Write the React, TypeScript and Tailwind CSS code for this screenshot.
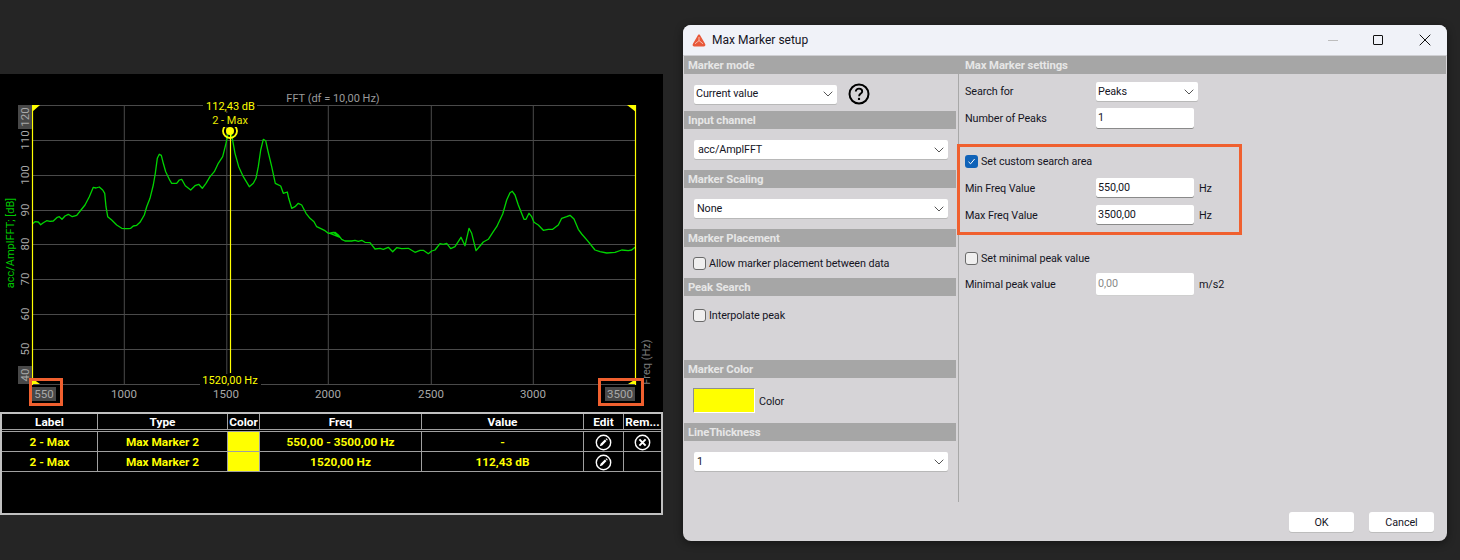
const Z1: number[][] = [[97,462],[105,455],[115,456],[122,464],[130,458],[140,452],[150,454],[160,453],[172,442],[178,440],[186,448],[195,438],[205,433],[217,440],[230,436],[243,420],[255,405],[268,380],[280,352],[288,354],[298,351],[308,360],[314,370],[318,410],[323,440],[335,450],[350,465],[365,475],[375,476],[385,476],[392,475],[400,468],[410,466],[420,457],[433,435],[440,410],[450,385],[460,345],[466,310],[472,265],[478,253],[484,256],[490,280],[497,305],[510,332],[515,340],[530,340],[538,330],[545,328],[556,347],[572,360],[585,347],[596,343],[607,355],[618,340],[630,320],[643,305],[655,280],[668,260],[678,220],[684,190],[690,183],[696,200],[705,250],[716,290],[730,320],[748,350],[760,340],[768,325],[775,290],[782,240],[790,208],[797,212],[803,240],[815,290],[826,340],[832,343],[842,348],[850,370],[862,366],[866,385],[875,415],[885,410],[895,400],[905,405],[918,430],[930,445],[942,455],[950,470],[975,482],[985,490],[1000,487],[1020,502]];
const Z2: number[][] = [[0,490],[15,487],[25,495],[35,508],[45,513],[65,513],[75,511],[85,514],[95,511],[105,517],[120,518],[135,537],[150,535],[160,538],[175,532],[188,545],[200,533],[215,536],[235,535],[255,547],[270,541],[280,541],[295,551],[305,543],[315,540],[330,521],[340,523],[350,520],[362,536],[375,530],[393,502],[405,527],[417,475],[425,490],[438,542],[450,528],[460,516],[475,508],[490,485],[500,470],[518,432],[530,390],[540,368],[547,364],[555,375],[565,405],[582,448],[588,448],[597,430],[605,440],[612,457],[625,465],[640,481],[655,478],[668,478],[685,465],[695,445],[710,440],[720,436],[732,447],[745,478],[755,492],[775,515],[795,540],[810,545],[830,549],[855,547],[875,540],[895,542],[905,540],[915,532]];
const trace = [
  ...Z1.map(([x, y]) => `${(x / 3).toFixed(1)},${(70 + y / 3).toFixed(1)}`),
  ...Z2.map(([x, y]) => `${(330 + x / 3).toFixed(1)},${(70 + y / 3).toFixed(1)}`),
].join(" ");

const hLines = [105, 140, 175, 210, 244, 279, 314, 349, 384];
const vLines = [124, 226.5, 328, 431, 533];
const yTicks: [string, number][] = [["110", 140], ["100", 175], ["90", 210], ["80", 244], ["70", 279], ["60", 314], ["50", 349]];
const xTicks: [string, number][] = [["1000", 124], ["1500", 226], ["2000", 328], ["2500", 431], ["3000", 533]];

function Chart() {
  return (
    <div className="relative h-[338px] w-[663px] bg-black">
      <svg width="663" height="338" viewBox="0 74 663 338" className="block" style={{ fontFamily: "Roboto, sans-serif" }}>
        {hLines.map((y) => (
          <line key={y} x1="32" x2="635" y1={y + 0.5} y2={y + 0.5} stroke="#4a4a4a" />
        ))}
        {vLines.map((x) => (
          <line key={x} x1={x + 0.3} x2={x + 0.3} y1="105" y2="384" stroke="#4a4a4a" />
        ))}
        <polyline points={trace} fill="none" stroke="#00d400" strokeWidth="1.3" strokeLinejoin="round" />
        <line x1="32.5" x2="32.5" y1="105" y2="385" stroke="#ffff00" strokeWidth="1.2" />
        <line x1="635.5" x2="635.5" y1="105" y2="385" stroke="#ffff00" strokeWidth="1.2" />
        <line x1="230.5" x2="230.5" y1="132" y2="373" stroke="#ffff00" strokeWidth="1.2" />
        <polygon points="32,105 40,105 32,112" fill="#ffff00" />
        <polygon points="627,105 636,105 636,112" fill="#ffff00" />
        <polygon points="33,384 33,379 40,384" fill="#ffff00" />
        <polygon points="636,384 636,379 628,384" fill="#ffff00" />

        <circle cx="230" cy="131" r="7" fill="none" stroke="#ffff00" strokeWidth="1.8" />
        <circle cx="230" cy="131" r="4" fill="#ffff00" />
        <rect x="203" y="100" width="54" height="11" fill="#000" />
        <rect x="212" y="113" width="36" height="14" fill="#000" />
        <rect x="200" y="374" width="61" height="13" fill="#000" />
        <text x="333" y="102" textAnchor="middle" fontSize="11" fill="#9a9a9a">FFT (df = 10,00 Hz)</text>
        <text x="230.5" y="110" textAnchor="middle" fontSize="11" fill="#ffff00">112,43 dB</text>
        <text x="230" y="124" textAnchor="middle" fontSize="11" fill="#e8e800">2 - Max</text>
        <text x="230" y="384" textAnchor="middle" fontSize="11" fill="#ffff00">1520,00 Hz</text>

        <rect x="18" y="105" width="14" height="24" fill="#484848" />
        <rect x="18" y="366" width="14" height="18" fill="#484848" />
        <rect x="32" y="387" width="24" height="14" fill="#484848" />
        <rect x="605" y="387" width="30" height="14" fill="#484848" />
        <text transform="translate(29 117) rotate(-90)" textAnchor="middle" fontSize="11.5" fill="#a8a8a8">120</text>
        <text transform="translate(29 375) rotate(-90)" textAnchor="middle" fontSize="11.5" fill="#a8a8a8">40</text>
        {yTicks.map(([t, y]) => (
          <text key={t} transform={`translate(29 ${y}) rotate(-90)`} textAnchor="middle" fontSize="11.5" fill="#a8a8a8">{t}</text>
        ))}
        {xTicks.map(([t, x]) => (
          <text key={t} x={x} y="398" textAnchor="middle" fontSize="11.5" fill="#a8a8a8">{t}</text>
        ))}
        <text x="44" y="398" textAnchor="middle" fontSize="11.5" fill="#a8a8a8">550</text>
        <text x="620" y="398" textAnchor="middle" fontSize="11.5" fill="#a8a8a8">3500</text>
        <text transform="translate(14 243) rotate(-90)" textAnchor="middle" fontSize="11" fill="#00c800">acc/AmplFFT; [dB]</text>
        <text transform="translate(650 362) rotate(-90)" textAnchor="middle" fontSize="11" fill="#7c7c7c">Freq (Hz)</text>
      </svg>
      <div className="absolute left-[29px] top-[304px] h-[28px] w-[34px] border-[3px] border-[#f0602f]" />
      <div className="absolute left-[598px] top-[304px] h-[28px] w-[46px] border-[3px] border-[#f0602f]" />
    </div>
  );
}

function EditIcon() {
  return (
    <svg width="17" height="17" viewBox="0 0 17 17" className="block">
      <circle cx="8.5" cy="8.5" r="7.2" fill="none" stroke="#fff" strokeWidth="1.4" />
      <path d="M4.8 12.2 L5.6 9.8 L9.9 5.5 L11.5 7.1 L7.2 11.4 Z M10.5 4.9 L11.3 4.2 L12.8 5.7 L12.1 6.5 Z" fill="#fff" />
    </svg>
  );
}
function RemoveIcon() {
  return (
    <svg width="17" height="17" viewBox="0 0 17 17" className="block">
      <circle cx="8.5" cy="8.5" r="7.2" fill="none" stroke="#fff" strokeWidth="1.4" />
      <path d="M5.4 5.4 L11.6 11.6 M11.6 5.4 L5.4 11.6" stroke="#fff" strokeWidth="2" />
    </svg>
  );
}

const cols = "grid grid-cols-[96px_130px_32px_162px_162px_40px_37px]";

function Cell({ children, last, className = "" }: { children?: React.ReactNode; last?: boolean; className?: string }) {
  return (
    <div className={`flex items-center justify-center overflow-hidden whitespace-nowrap ${last ? "" : "border-r border-[#a0a0a0]"} ${className}`}>
      {children}
    </div>
  );
}

function MarkerRow({ freq, value, remove }: { freq: string; value: string; remove?: boolean }) {
  return (
    <div className={`${cols} h-[20px] border-b border-[#a0a0a0] text-[#ffff00]`}>
      <Cell className="pt-[2px]">2 - Max</Cell>
      <Cell className="pt-[2px]">Max Marker 2</Cell>
      <Cell className="bg-[#ffff00]" />
      <Cell className="pt-[2px]">{freq}</Cell>
      <Cell className="pt-[2px]">{value}</Cell>
      <Cell className="pt-[2px]"><EditIcon /></Cell>
      <Cell last className="pt-[2px]">{remove ? <RemoveIcon /> : null}</Cell>
    </div>
  );
}

function MarkerTable() {
  return (
    <div className="h-[103px] w-[663px] border-2 border-[#c0c0c0] bg-black text-[11.8px] font-bold" style={{ fontFamily: "Roboto, sans-serif" }}>
      <div className={`${cols} h-[18px] border-b-[3px] border-double border-[#a0a0a0] text-white`}>
        <Cell className="pt-[2px]">Label</Cell>
        <Cell className="pt-[2px]">Type</Cell>
        <Cell className="pt-[2px]">Color</Cell>
        <Cell className="pt-[2px]">Freq</Cell>
        <Cell className="pt-[2px]">Value</Cell>
        <Cell className="pt-[2px]">Edit</Cell>
        <Cell last className="pt-[2px]">Rem...</Cell>
      </div>
      <MarkerRow freq="550,00 - 3500,00 Hz" value="-" remove />
      <MarkerRow freq="1520,00 Hz" value="112,43 dB" />
    </div>
  );
}

function Chevron() {
  return (
    <svg width="10" height="6" viewBox="0 0 10 6" className="block">
      <path d="M0.7 0.7 L5 5 L9.3 0.7" fill="none" stroke="#555" strokeWidth="1" />
    </svg>
  );
}

function Combo({ text, width, pad = "pl-[3px]" }: { text: string; width: string; pad?: string }) {
  return (
    <div className={`flex h-[19px] items-center justify-between rounded-[2px] bg-white pr-[4px] shadow-[0_1px_0_#b8b8b8] ${width} ${pad}`}>
      <span className="pt-px">{text}</span>
      <Chevron />
    </div>
  );
}

function Check({ checked, label }: { checked?: boolean; label: string }) {
  return (
    <div className="flex h-[14px] items-center">
      {checked ? (
        <span className="flex h-[13px] w-[13px] items-center justify-center rounded-[3px] bg-[#0f62b8]">
          <svg width="9" height="9" viewBox="0 0 9 9" className="block">
            <path d="M1.5 4.8 L3.6 6.8 L7.6 2" fill="none" stroke="#fff" strokeWidth="1" />
          </svg>
        </span>
      ) : (
        <span className="h-[13px] w-[13px] rounded-[3px] border border-[#6a6a6a] bg-[#f0efef]" />
      )}
      <span className="ml-[3px] pt-[2px]">{label}</span>
    </div>
  );
}

function Bar({ children }: { children: string }) {
  return (
    <div className="flex h-[18px] items-center bg-[#a6a6a6] pl-[4px] pt-[2px] text-[11.3px] font-bold text-[#e6e6e6]">{children}</div>
  );
}

function Field({ label, value, unit, h = "h-[20px]", mt, disabled }: { label: string; value: string; unit?: string; h?: string; mt: string; disabled?: boolean }) {
  return (
    <div className={`flex items-center ${mt}`}>
      <span className="w-[131px] pt-[2px]">{label}</span>
      <div className={`flex w-[98px] items-center rounded-[2px] bg-white pl-[2px] ${h} ${disabled ? "text-[#8a8a8a] shadow-[0_1px_0_#cfcfcf]" : "shadow-[inset_0_-1px_0_#8a8a8a]"}`}>{value}</div>
      {unit ? <span className="ml-[5px] pt-[2px]">{unit}</span> : null}
    </div>
  );
}

function Dialog() {
  return (
    <div className="relative flex h-[516px] w-[764px] flex-col overflow-hidden rounded-[8px] bg-[#d6d4d7] text-[10.8px] tracking-[-0.1px] text-[#15151f] shadow-[0_2px_8px_rgba(0,0,0,0.45)]" style={{ fontFamily: "Roboto, sans-serif" }}>
      <div className="flex h-[31px] flex-none items-center border-b border-[#cfcfd3] bg-[#f0f2f8]">
        <svg width="14" height="13" viewBox="0 0 14 13" className="ml-[9px] block">
          <path d="M7 0.5 C7.7 0.5 8 1 8.4 1.7 L13.2 10 C13.8 11.2 13 12.4 11.8 12.4 L2.2 12.4 C1 12.4 0.2 11.2 0.8 10 L5.6 1.7 C6 1 6.3 0.5 7 0.5 Z" fill="#e8583a" />
          <path d="M7 3 L7 6.6 M7 6.6 L3 9.8 M7 6.6 L11 9.8" stroke="#fbe6df" strokeWidth="0.7" fill="none" />
        </svg>
        <span className="ml-[6px] text-[12px] tracking-normal">Max Marker setup</span>
        <div className="flex-1" />
        <div className="mr-[35px] h-px w-[10px] bg-[#bdbdbd]" />
        <div className="mr-[36px] h-[10px] w-[10px] rounded-[1px] border border-[#111]" />
        <svg width="12" height="12" viewBox="0 0 12 12" className="mr-[16px] block">
          <path d="M0.7 0.7 L11.3 11.3 M11.3 0.7 L0.7 11.3" stroke="#111" strokeWidth="1" />
        </svg>
      </div>
      <div className="flex-1 px-px">
        <div className="flex h-[18px] bg-[#a6a6a6] pt-[2px] text-[11.3px] font-bold text-[#e6e6e6]">
          <div className="flex w-[281px] items-center pl-[4px]">Marker mode</div>
          <div className="flex items-center">Max Marker settings</div>
        </div>
        <div className="flex">
          <div className="w-[272px] flex-none">
            <div className="h-[37px] pl-[10px] pt-[9px]">
              <div className="flex items-center">
                <Combo text="Current value" width="w-[143px]" pad="pl-[2px]" />
                <svg width="22" height="22" viewBox="0 0 22 22" className="ml-[11px] block">
                  <circle cx="11" cy="11" r="9.5" fill="none" stroke="#000" strokeWidth="2" />
                  <path d="M7.8 8.6 C7.8 6.6 9.3 5.6 11 5.6 C12.8 5.6 14.2 6.7 14.2 8.4 C14.2 10.6 11.1 10.6 11.1 13.2" fill="none" stroke="#000" strokeWidth="1.9" />
                  <circle cx="11" cy="15.9" r="1.2" fill="#000" />
                </svg>
              </div>
            </div>
            <Bar>Input channel</Bar>
            <div className="h-[41px] pl-[10px] pt-[11px]"><Combo text="acc/AmplFFT" width="w-[254px]" pad="pl-[4px]" /></div>
            <Bar>Marker Scaling</Bar>
            <div className="h-[41px] pl-[10px] pt-[11px]"><Combo text="None" width="w-[254px]" /></div>
            <Bar>Marker Placement</Bar>
            <div className="h-[31px] pl-[9px] pt-[9px]"><Check label="Allow marker placement between data" /></div>
            <Bar>Peak Search</Bar>
            <div className="h-[64px] pl-[9px] pt-[12px]"><Check label="Interpolate peak" /></div>
            <Bar>Marker Color</Bar>
            <div className="flex h-[45px] items-start pl-[9px] pt-[10px]">
              <div className="h-[25px] w-[62px] border border-t-[#8f8f8f] border-l-[#8f8f8f] border-r-white border-b-white bg-[#ffff00]" />
              <span className="ml-[4px] mt-[6px]">Color</span>
            </div>
            <Bar>LineThickness</Bar>
            <div className="pl-[10px] pt-[11px]"><Combo text="1" width="w-[254px]" /></div>
          </div>
          <div className="ml-[2px] h-[428px] flex-1 border-l border-[#a8a8a8] pl-[6px]">
            <div className="mt-[8px] flex items-center">
              <span className="w-[131px] pt-[2px]">Search for</span>
              <Combo text="Peaks" width="w-[102px]" pad="pl-[2px]" />
            </div>
            <Field label="Number of Peaks" value="1" h="h-[21px]" mt="mt-[7px]" />
            <div className="mt-[25px]"><Check checked label="Set custom search area" /></div>
            <Field label="Min Freq Value" value="550,00" unit="Hz" mt="mt-[10px]" />
            <Field label="Max Freq Value" value="3500,00" unit="Hz" mt="mt-[7px]" />
            <div className="mt-[26px]"><Check label="Set minimal peak value" /></div>
            <Field label="Minimal peak value" value="0,00" unit="m/s2" h="h-[22px]" mt="mt-[8px]" disabled />
          </div>
        </div>
      </div>
      <div className="flex h-[39px] flex-none justify-end gap-[15px] pr-[13px] pt-[10px]">
        <div className="flex h-[20px] w-[65px] items-center justify-center rounded-[3px] bg-white pt-[2px] shadow-[0_1px_0_#bdbdbd]">OK</div>
        <div className="flex h-[20px] w-[65px] items-center justify-center rounded-[3px] bg-white pt-[2px] shadow-[0_1px_0_#bdbdbd]">Cancel</div>
      </div>
      <div className="absolute left-[274px] top-[119px] h-[91px] w-[285px] border-[3px] border-[#f0602f]" />
    </div>
  );
}

export default function App() {
  return (
    <div className="flex h-[560px] w-[1460px] items-start overflow-hidden bg-[#252525]">
      <div className="mt-[74px] flex w-[663px] flex-none flex-col">
        <Chart />
        <MarkerTable />
      </div>
      <div className="ml-[20px] mt-[25px]">
        <Dialog />
      </div>
    </div>
  );
}
